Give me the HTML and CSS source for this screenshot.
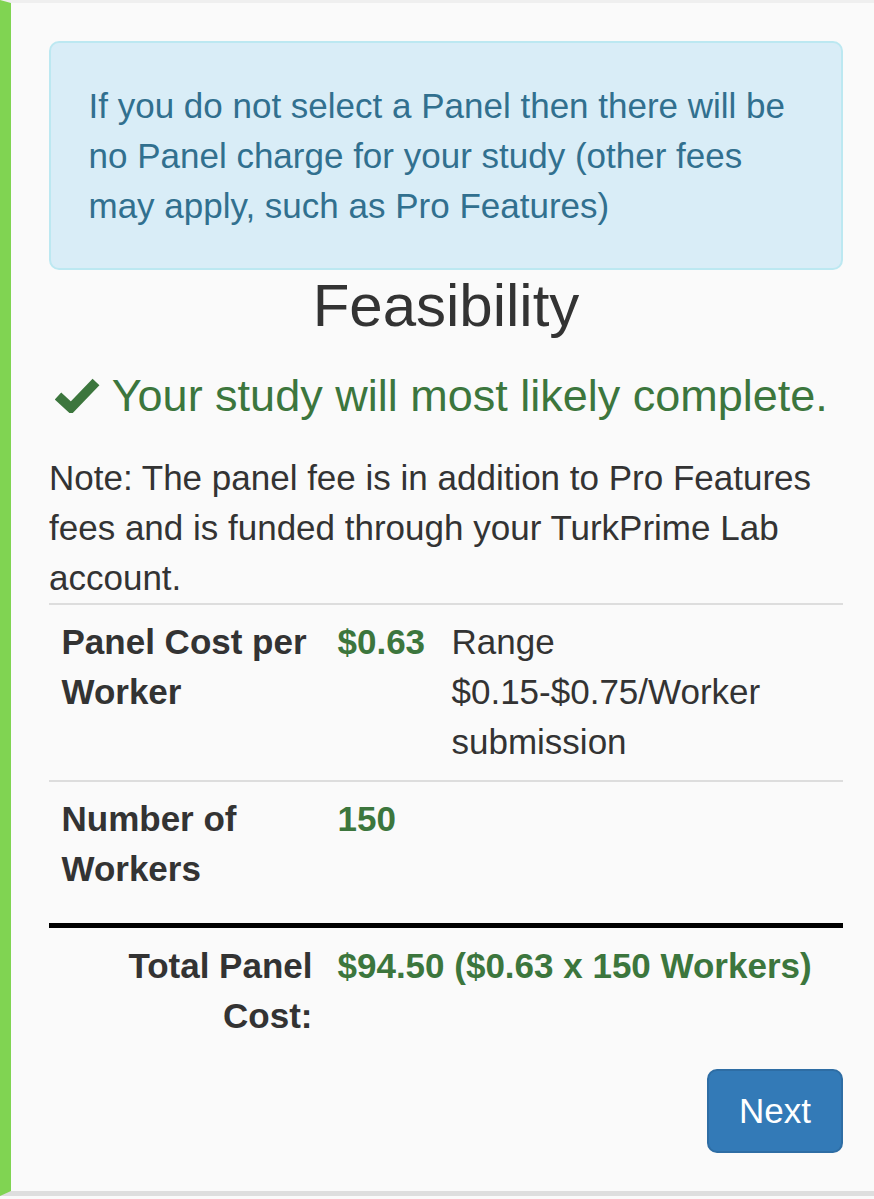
FILE: index.html
```html
<!DOCTYPE html>
<html>
  <head>
    <title>Panel Feasibility</title>
    <link rel="stylesheet" href="styles.css">
  </head>
  <body>
    <div class="panel">
      <div class="alert-info">
        If you do not select a Panel then there will be no Panel charge for your study (other fees may apply, such as Pro Features)
      </div>
      <h3 class="feasibility-title">Feasibility</h3>
      <h4 class="text-success">
        <svg class="icon-ok" width="45" height="36" viewBox="0 0 45 36">
          <polyline points="3,19 16,31 41,5" fill="none" stroke="#3c763d" stroke-width="9.5" stroke-linejoin="miter"/>
        </svg>
        Your study will most likely complete.
      </h4>
      <p class="note">Note: The panel fee is in addition to Pro Features fees and is funded through your TurkPrime Lab account.</p>
      <table class="cost-table">
        <colgroup>
          <col class="col-label">
          <col class="col-value">
          <col>
        </colgroup>
        <tr>
          <th>Panel Cost per Worker</th>
          <td class="value">$0.63</td>
          <td>Range $0.15-$0.75/Worker submission</td>
        </tr>
        <tr>
          <th>Number of Workers</th>
          <td class="value">150</td>
          <td></td>
        </tr>
      </table>
      <table class="total-table">
        <colgroup>
          <col class="col-label">
          <col>
        </colgroup>
        <tr>
          <th class="total-label">Total Panel Cost:</th>
          <td class="value">$94.50 ($0.63 x 150 Workers)</td>
        </tr>
      </table>
      <div class="actions">
        <button class="btn-primary">Next</button>
      </div>
    </div>
  </body>
</html>
```

FILE: styles.css
```css
html,
body {
  margin: 0;
  background-color: #fafafa;
}

body {
  font-family: "Liberation Sans", Arial, sans-serif;
  font-size: 35px;
  line-height: 50px;
  color: #333;
}

.panel {
  border-top: 3px solid #efefef;
  border-left: 11px solid #80d452;
  border-bottom: 5px solid #dedede;
  background-color: #fafafa;
  padding: 38px 31px 38px 38px;
}

.alert-info {
  background-color: #d9edf7;
  border: 2.5px solid #bce8f1;
  border-radius: 10px;
  color: #31708f;
  padding: 37.5px;
}

.feasibility-title {
  font-size: 60px;
  font-weight: normal;
  line-height: 66px;
  text-align: center;
  margin: 3px 0 0;
}

.text-success {
  color: #3c763d;
  font-size: 45px;
  font-weight: normal;
  line-height: 49.5px;
  margin: 32px 0 32px;
}

.icon-ok {
  margin-left: 6px;
  vertical-align: -2px;
}

.note {
  margin: 0;
}

.cost-table,
.total-table {
  width: 100%;
  border-collapse: collapse;
  table-layout: fixed;
}

.col-label {
  width: 276px;
}

.col-value {
  width: 114px;
}

.cost-table th,
.cost-table td {
  border-top: 2.5px solid #ddd;
  padding: 12.5px;
  vertical-align: top;
  text-align: left;
}

.cost-table tr:last-child td,
.cost-table tr:last-child th {
  padding-bottom: 29px;
}

.total-table {
  border-top: 5px solid #000;
}

.total-table th,
.total-table td {
  padding: 12.5px;
  vertical-align: top;
}

.total-label {
  text-align: right;
}

th {
  font-weight: bold;
}

.value {
  color: #3c763d;
  font-weight: bold;
}

.actions {
  text-align: right;
  margin-top: 16px;
}

.btn-primary {
  font-family: "Liberation Sans", Arial, sans-serif;
  font-size: 35px;
  line-height: 50px;
  color: #fff;
  background-color: #337ab7;
  border: 2.5px solid #2e6da4;
  border-radius: 10px;
  padding: 15px 30px;
  cursor: pointer;
}
```
